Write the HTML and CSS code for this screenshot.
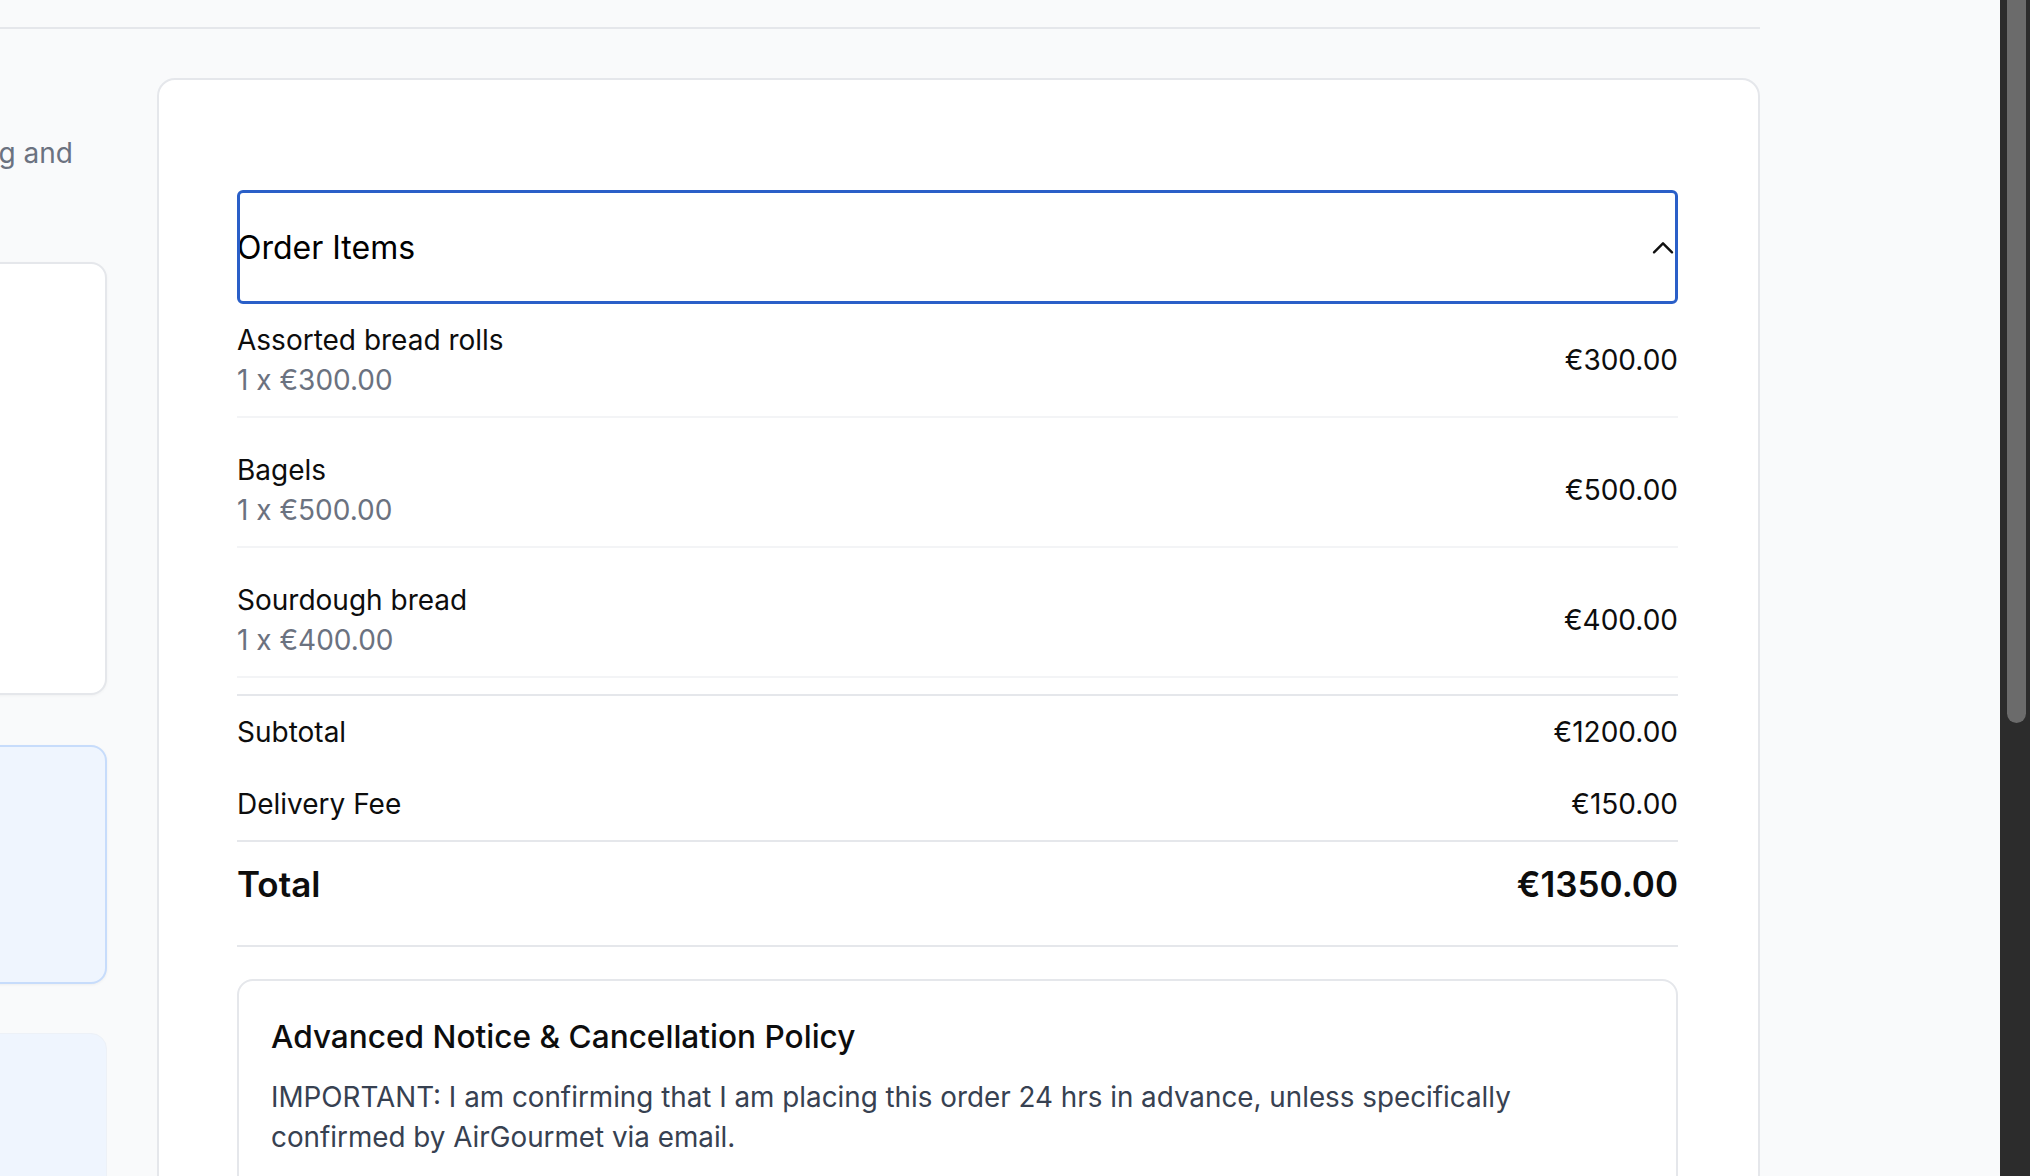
FILE: index.html
```html
<!DOCTYPE html>
<html lang="en">
<head>
<meta charset="utf-8">
<title>Checkout – Order Summary</title>
<link rel="stylesheet" href="styles.css">
</head>
<body>
<div class="shell">
  <header class="topbar"></header>
  <div class="layout">
    <aside class="side">
      <p class="intro">Confirm your timing and</p>
      <div class="panel panel-white"></div>
      <div class="panel panel-blue"></div>
      <div class="panel panel-soft"></div>
    </aside>
    <main class="card">
      <button class="acc-trigger" type="button">
        <span>Order Items</span>
        <svg class="chev" width="22" height="13" viewBox="0 0 22 13" aria-hidden="true"><polyline points="2,11.3 11,2.3 20,11.3" fill="none" stroke="#111" stroke-width="2.4" stroke-linecap="round" stroke-linejoin="round"/></svg>
      </button>
      <ul class="items">
        <li class="item">
          <div class="item-info">
            <div class="item-name">Assorted bread rolls</div>
            <div class="item-qty">1 x €300.00</div>
          </div>
          <div class="item-price">€300.00</div>
        </li>
        <li class="item">
          <div class="item-info">
            <div class="item-name">Bagels</div>
            <div class="item-qty">1 x €500.00</div>
          </div>
          <div class="item-price">€500.00</div>
        </li>
        <li class="item">
          <div class="item-info">
            <div class="item-name">Sourdough bread</div>
            <div class="item-qty">1 x €400.00</div>
          </div>
          <div class="item-price">€400.00</div>
        </li>
      </ul>
      <div class="summary">
        <div class="sum-row"><span>Subtotal</span><span>€1200.00</span></div>
        <div class="sum-row sum-fee"><span>Delivery Fee</span><span>€150.00</span></div>
        <div class="sum-row sum-total"><span>Total</span><span>€1350.00</span></div>
      </div>
      <section class="policy">
        <h3 class="policy-title">Advanced Notice &amp; Cancellation Policy</h3>
        <p class="policy-text">IMPORTANT: I am confirming that I am placing this order 24 hrs in advance, unless specifically confirmed by AirGourmet via email.</p>
      </section>
    </main>
  </div>
</div>
<div class="scrollbar"><div class="thumb"></div></div>
</body>
</html>
```
FILE: styles.css
```css
* { box-sizing: border-box; }
html, body {
  margin: 0;
  height: 100%;
  overflow: hidden;
  background: #f9fafb;
  font-family: Inter, "Noto Sans", "Liberation Sans", sans-serif;
  color: #111;
}
.shell {
  width: 2133px;
  margin-left: -373px;
}
.topbar {
  height: 29px;
  border-bottom: 2px solid #e5e7eb;
}
.layout {
  display: flex;
  align-items: flex-start;
  gap: 50px;
}
.side {
  flex: none;
  width: 480px;
  padding-top: 104px;
}
.intro {
  margin: 0;
  padding-right: 34px;
  font-size: 28px;
  line-height: 40px;
  color: #6b7280;
  text-align: right;
  white-space: nowrap;
}
.panel {
  border-radius: 16px;
}
.panel-white {
  margin-top: 89px;
  height: 433px;
  background: #fff;
  border: 2px solid #e5e7eb;
  box-shadow: 0 1px 3px rgba(0,0,0,0.04);
}
.panel-blue {
  margin-top: 50px;
  height: 239px;
  background: #eff5fe;
  border: 2px solid #c7dcfb;
  box-shadow: 0 1px 3px rgba(0,0,0,0.05);
}
.panel-soft {
  margin-top: 49px;
  height: 400px;
  background: #eff5fe;
  border: 1px solid #edf1f7;
}
.card {
  flex: none;
  width: 1603px;
  margin-top: 49px;
  background: #fff;
  border: 2px solid #e5e7eb;
  border-radius: 18px;
  padding: 110px 80px 60px 78px;
}
.acc-trigger {
  display: flex;
  align-items: center;
  justify-content: space-between;
  width: 100%;
  height: 114px;
  padding: 0 4px 0 0;
  margin: 0;
  border: 0;
  border-radius: 6px;
  background: #fff;
  outline: 3px solid #2a5fc8;
  outline-offset: -3px;
  font-family: inherit;
  font-size: 32px;
  font-weight: 400;
  color: #000;
  text-align: left;
}
.chev { display: block; flex: none; }
.items {
  list-style: none;
  margin: 0;
  padding: 0;
}
.item {
  display: flex;
  align-items: center;
  justify-content: space-between;
  padding: 16px 0;
  border-bottom: 2px solid #f3f4f6;
}
.item + .item { margin-top: 16px; }
.item-name, .item-qty, .item-price {
  font-size: 28px;
  line-height: 40px;
}
.item-name { color: #0d0d0d; }
.item-qty { color: #6b7280; }
.item-price { color: #0d0d0d; }
.summary {
  margin-top: 16px;
  border-top: 2px solid #e5e7eb;
}
.sum-row {
  display: flex;
  justify-content: space-between;
  padding: 16px 0;
  font-size: 28px;
  line-height: 40px;
  color: #0d0d0d;
}
.sum-fee { border-bottom: 2px solid #e5e7eb; }
.sum-total {
  padding: 18px 0 37px;
  font-size: 35px;
  line-height: 48px;
  font-weight: 600;
  border-bottom: 2px solid #e5e7eb;
}
.policy {
  margin-top: 32px;
  border: 2px solid #e5e7eb;
  border-radius: 16px;
  padding: 36px 32px 40px;
}
.policy-title {
  margin: 0 0 20px;
  font-size: 31.6px;
  line-height: 40px;
  font-weight: 500;
  color: #0d0d0d;
}
.policy-text {
  margin: 0;
  max-width: 1300px;
  font-size: 27.8px;
  line-height: 40px;
  color: #374151;
}
.scrollbar {
  position: fixed;
  top: 0;
  right: 0;
  width: 30px;
  height: 100%;
  background: #2c2c2c;
}
.thumb {
  position: absolute;
  top: 0;
  left: 7px;
  right: 4px;
  height: 723px;
  background: #6b6b6b;
  border-radius: 0 0 10px 10px;
}
```
